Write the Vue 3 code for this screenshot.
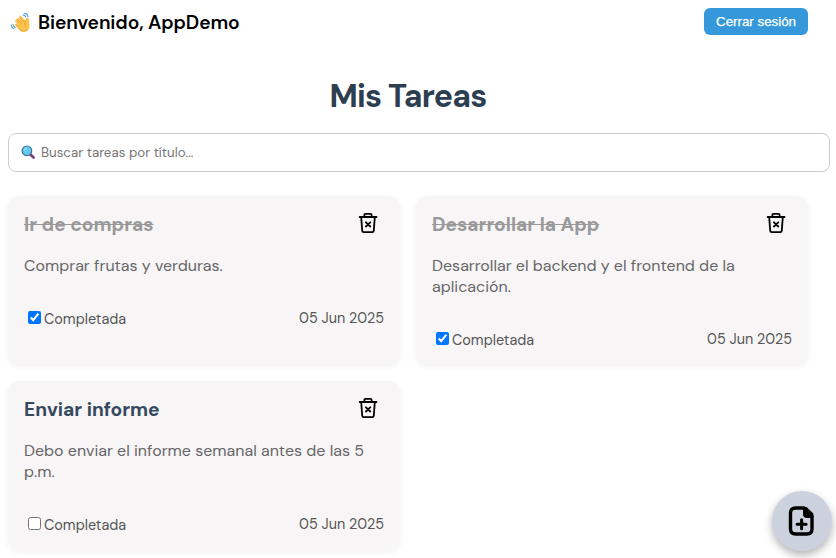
<script setup>
import { ref, computed } from 'vue'

const search = ref('')
const tasks = ref([
  { id: 1, title: 'Ir de compras', text: 'Comprar frutas y verduras.', done: true, date: '05 Jun 2025' },
  { id: 2, title: 'Desarrollar la App', text: 'Desarrollar el backend y el frontend de la aplicación.', done: true, date: '05 Jun 2025' },
  { id: 3, title: 'Enviar informe', text: 'Debo enviar el informe semanal antes de las 5 p.m.', done: false, date: '05 Jun 2025' },
])
const visible = computed(() =>
  tasks.value.filter((t) => t.title.toLowerCase().includes(search.value.toLowerCase()))
)
function remove(id) {
  tasks.value = tasks.value.filter((t) => t.id !== id)
}
</script>

<template>
  <div class="page">
    <header class="header">
      <div class="welcome">
        <svg class="wave" viewBox="0 0 22 22">
          <g fill="none" stroke="#6aa9d8" stroke-width="1.2" stroke-linecap="round">
            <path d="M13.2 3.2Q15.2 3.3 15.8 5M14.2 1.4Q17.6 1.6 18 4.6M3 12.4Q3.2 14.6 5.2 15.4M1.2 12.9Q1.5 15.9 4 16.8" />
          </g>
          <path d="M6.2 7.4 8.2 5.7 12.8 9 9.2 5.1Q9 3.7 10.4 3.4L15.5 8.5 16.4 6.1Q18.2 5.2 19 7L19.6 14.5Q18.5 19.8 14 20Q11 20 9 17.5L5 13.5Q4.3 12.4 5.5 11.7L8 13 5 9.5Q4.8 8.2 6.2 7.4Z" fill="#fbc34d" />
          <path d="M7.2 8 11.5 12M9.8 5.6 13.5 9.6M6.4 12.5 9.8 15.4M15.5 8.7Q13.6 11 15.2 13.4M9 17.5Q13.5 20.5 17.6 17.8" fill="none" stroke="#e69a31" stroke-width=".8" stroke-linecap="round" />
        </svg>
        <span>Bienvenido, AppDemo</span>
      </div>
      <button class="logout">Cerrar sesión</button>
    </header>

    <h1 class="heading">Mis Tareas</h1>

    <label class="search">
      <svg class="lens" viewBox="0 0 15 15">
        <path d="M9.4 9.4 12.6 12.4" stroke="#7b3f78" stroke-width="2.8" stroke-linecap="round" />
        <circle cx="5.9" cy="5.8" r="4.8" fill="#62cbec" stroke="#3d6e9e" stroke-width="1.2" />
        <path d="M3.4 5.2Q3.8 3.5 5.5 3.2" fill="none" stroke="#a5e7f8" stroke-linecap="round" />
      </svg>
      <input v-model="search" type="text" placeholder="Buscar tareas por título..." />
    </label>

    <main class="grid">
      <article v-for="task in visible" :key="task.id" class="card">
        <div class="card-head">
          <h2 class="title" :class="{ done: task.done }">{{ task.title }}</h2>
          <button class="delete" aria-label="Eliminar" @click="remove(task.id)">
            <svg viewBox="0 0 24 24" fill="none" stroke="#000" stroke-width="1.8" stroke-linecap="round" stroke-linejoin="round">
              <path d="M3.7 6h16.8M8.4 5.7V3.9Q8.4 2.9 9.5 2.9h5Q15.6 2.9 15.6 3.9V5.7M5.2 6.2 6.2 19.6Q6.3 21.1 7.8 21.1h8.4Q17.7 21.1 17.8 19.6L18.8 6.2M9.9 11.3l4.4 4.2M14.3 11.3 9.9 15.5" />
            </svg>
          </button>
        </div>
        <p class="text">{{ task.text }}</p>
        <div class="foot">
          <label class="check"><input v-model="task.done" type="checkbox" /><span>Completada</span></label>
          <span class="date">{{ task.date }}</span>
        </div>
      </article>
    </main>

    <button class="add" aria-label="Agregar">
      <svg viewBox="0 0 30 34">
        <path d="M8 4H17L25 12V25Q25 30 20 30H8.5Q3.5 30 3.5 25V9Q3.5 4 8.5 4Z" fill="none" stroke="#000" stroke-width="3.4" stroke-linejoin="round" />
        <path d="M16 3H19.5L26.3 9.5V14H20Q16 14 16 10Z" fill="#000" />
        <path d="M14.6 15.8v9M10.1 20.3h9" stroke="#000" stroke-width="3" stroke-linecap="round" />
      </svg>
    </button>
  </div>
</template>

<style>
body {
  background: #fff;
  overflow: hidden;
}
</style>

<style scoped>
.page {
  width: 800px;
  height: 542px;
  padding: 8px;
  font-family: "DM Sans", Inter, sans-serif;
  color: #000;
}
.header {
  display: flex;
  justify-content: space-between;
  align-items: flex-start;
  height: 67px;
}
.welcome {
  display: flex;
  align-items: center;
  gap: 6px;
  height: 29px;
  padding-left: 2px;
  font-size: 19.2px;
  font-weight: 600;
  letter-spacing: -0.1px;
  white-space: nowrap;
}
.wave {
  width: 22px;
  height: 22px;
}
.logout {
  width: 104px;
  height: 27px;
  padding: 0;
  border: 0;
  border-radius: 6px;
  background: #3498db;
  color: #fff;
  font: 400 13.333px "Liberation Sans", sans-serif;
  -webkit-text-stroke: 0.25px #fff;
}
.heading {
  margin: 0;
  height: 58px;
  line-height: 42px;
  text-align: center;
  font-size: 32px;
  font-weight: 700;
  letter-spacing: -0.75px;
  color: #2c3e50;
}
.search {
  display: flex;
  align-items: center;
  gap: 5px;
  box-sizing: border-box;
  width: 822px;
  height: 39px;
  padding: 0 12px;
  border: 1px solid #ccc;
  border-radius: 8px;
}
.lens {
  width: 15px;
  height: 15px;
}
.search input {
  flex: 1;
  padding: 0;
  border: 0;
  outline: 0;
  background: none;
  font: 400 13.333px "DM Sans", Inter, sans-serif;
}
.search input::placeholder {
  color: #757575;
}
.grid {
  display: grid;
  grid-template-columns: 1fr 1fr;
  grid-auto-rows: 169px;
  gap: 16px;
  margin-top: 24px;
}
.card {
  box-sizing: border-box;
  padding: 16px;
  border-radius: 12px;
  background: #f7f5f6;
  box-shadow: 0 2px 6px rgba(0, 0, 0, 0.06);
}
.card-head {
  display: flex;
  justify-content: space-between;
  height: 43px;
}
.title {
  margin: 0;
  line-height: 26px;
  font-size: 19.2px;
  font-weight: 700;
  color: #34495e;
  white-space: nowrap;
}
.title.done {
  color: #999;
  text-decoration: line-through;
}
.delete {
  width: 24px;
  height: 24px;
  margin: -1px 4px 0 0;
  padding: 0;
  border: 0;
  background: none;
}
.delete svg {
  display: block;
  width: 24px;
  height: 24px;
}
.text {
  margin: 0;
  line-height: 21px;
  font-size: 16px;
  color: #666;
}
.foot {
  display: flex;
  justify-content: space-between;
  margin-top: 32px;
  line-height: 20px;
  font-size: 14.4px;
  color: #555;
}
.check {
  display: flex;
}
.check input {
  width: 13px;
  height: 13px;
  margin: 3px 3px 3px 4px;
}
.check span {
  padding-top: 1px;
}
.add {
  position: fixed;
  left: 772px;
  top: 491px;
  width: 60px;
  height: 60px;
  padding: 0;
  border: 0;
  border-radius: 50%;
  background: #cbd2de;
  box-shadow: 0 4px 8px rgba(0, 0, 0, 0.3);
  display: grid;
  place-items: center;
}
.add svg {
  width: 30px;
  height: 34px;
}
</style>
